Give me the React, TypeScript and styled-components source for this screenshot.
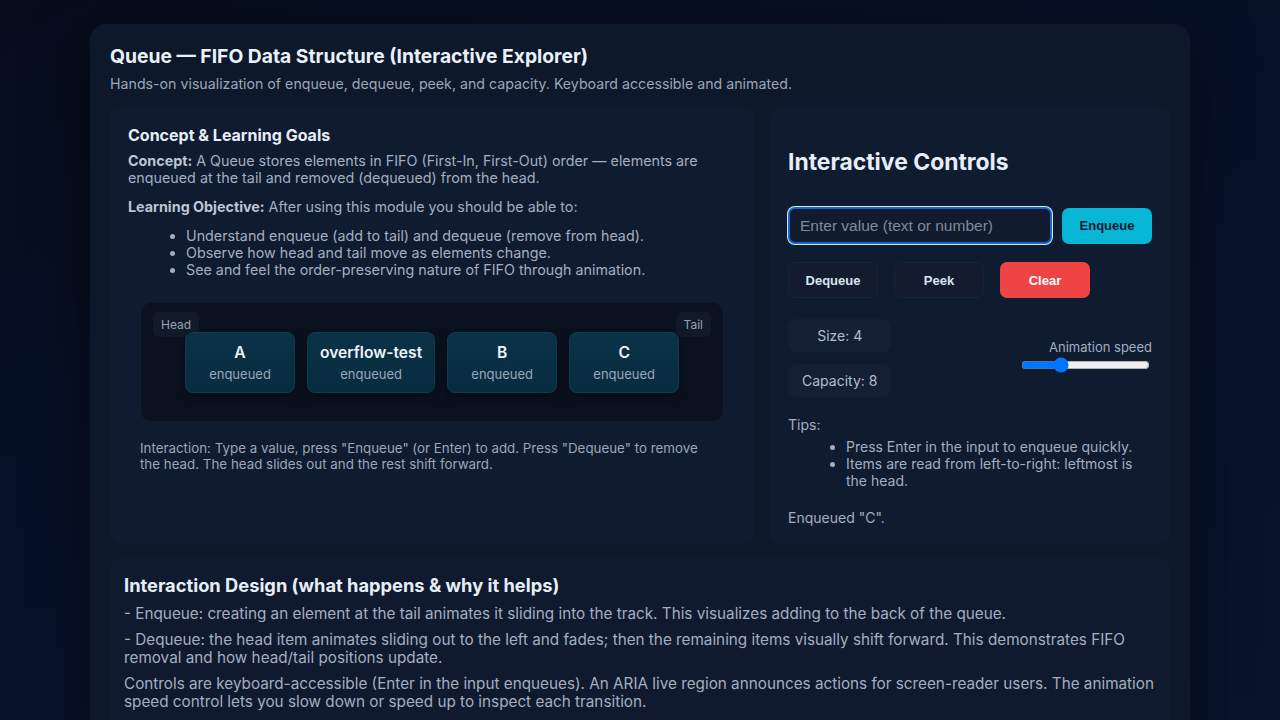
import React from "react";
import styled, { createGlobalStyle } from "styled-components";

const Global = createGlobalStyle`
  html, body { margin: 0; padding: 0; }
  body {
    background: linear-gradient(160deg, #050d1d 0%, #07122a 55%, #08152d 100%);
    min-height: 720px;
    font-family: Inter, "Noto Sans", sans-serif;
    color: #e6eef8;
  }
  * { box-sizing: border-box; }
`;

const Page = styled.div`
  padding: 24px 0 0;
`;

const Card = styled.main`
  width: 1100px;
  margin: 0 auto;
  background: #0d182b;
  border-radius: 16px;
  padding: 20px 20px 24px;
  box-shadow: 0 20px 60px rgba(0, 0, 0, 0.55);
`;

const Title = styled.h1`
  margin: 0;
  font-size: 19.3px;
  font-weight: 700;
  line-height: 24px;
  color: #eaf1fa;
`;

const Subtitle = styled.p`
  margin: 7px 0 16px;
  font-size: 14.2px;
  line-height: 17px;
  color: #9ba7b9;
`;

const Grid = styled.div`
  display: grid;
  grid-template-columns: minmax(0, 1fr) 400px;
  gap: 16px;
`;

const Panel = styled.section`
  background: #0f1b2f;
  border-radius: 10px;
  padding: 18px;
  min-width: 0;
`;

const PanelHeading = styled.h3`
  margin: 0 0 8px;
  font-size: 16px;
  line-height: 18px;
  font-weight: 700;
  color: #e6eef8;
`;

const Para = styled.p<{ $mt?: number }>`
  margin: ${(p) => p.$mt ?? 0}px 0 0;
  font-size: 14.3px;
  line-height: 17px;
  color: #a3afc0;
  b { color: #bcc6d4; font-weight: 700; margin-right: 4px; }
`;

const Bullets = styled.ul<{ $indent: number }>`
  margin: 12px 0 0;
  padding-left: ${(p) => p.$indent}px;
  font-size: 14.3px;
  line-height: 17px;
  color: #a3afc0;
`;

const TrackWrap = styled.div`
  padding: 25px 13px 0;
`;

const Track = styled.div`
  position: relative;
  background: #0a1220;
  border-radius: 10px;
  padding: 29px 44px 28px;
  display: flex;
  gap: 12px;
`;

const EndLabel = styled.span<{ $side: "left" | "right" }>`
  position: absolute;
  top: 9px;
  ${(p) => (p.$side === "left" ? "left: 12px;" : "right: 12px;")}
  font-size: 12px;
  line-height: 25px;
  height: 25px;
  padding: 0 8px;
  border-radius: 6px;
  background: #111a28;
  color: #97a3b5;
`;

const Item = styled.div`
  position: relative;
  flex-shrink: 0;
  min-width: 110px;
  height: 61px;
  padding: 0 12px;
  border-radius: 8px;
  background: linear-gradient(180deg, #0b3247 0%, #082c3f 100%);
  border: 1px solid #0f3c4d;
  box-shadow: 0 6px 14px rgba(0, 0, 0, 0.35);
  display: flex;
  flex-direction: column;
  align-items: center;
  justify-content: center;
  gap: 4px;
  white-space: nowrap;
`;

const ItemValue = styled.div`
  font-size: 15.6px;
  font-weight: 600;
  line-height: 19px;
  color: #eef5fb;
`;

const ItemState = styled.div`
  font-size: 13px;
  line-height: 16px;
  color: #97a9b8;
`;

const Note = styled.p`
  margin: 19px 30px 0 12px;
  font-size: 13.35px;
  line-height: 16px;
  color: #9ba7b9;
`;

const ControlsTitle = styled.h2`
  margin: 22px 0 0;
  font-size: 22.9px;
  line-height: 28px;
  font-weight: 700;
  color: #e6eef8;
`;

const InputRow = styled.div`
  display: flex;
  align-items: center;
  gap: 10px;
  margin-top: 31px;
`;

const TextInput = styled.input`
  flex: 1;
  height: 37px;
  border-radius: 7px;
  border: 2px solid #1665d6;
  box-shadow: 0 0 0 1px #dbe6f4;
  background: #111b2e;
  padding: 0 10px;
  font-family: "Liberation Sans", Arial, sans-serif;
  font-size: 15.5px;
  color: #e6eef8;
  outline: none;
  &::placeholder { color: #7f8b9d; }
`;

const Btn = styled.button<{ $variant: "primary" | "ghost" | "danger" }>`
  width: 90px;
  height: 36px;
  border-radius: 7px;
  font-family: "Liberation Sans", Arial, sans-serif;
  font-size: 13px;
  font-weight: 700;
  cursor: pointer;
  border: 1px solid
    ${(p) => (p.$variant === "ghost" ? "#182336" : "transparent")};
  background: ${(p) =>
    p.$variant === "primary" ? "#06b6d4" : p.$variant === "danger" ? "#ef4444" : "#121c2e"};
  color: ${(p) =>
    p.$variant === "primary" ? "#0a1a2a" : p.$variant === "danger" ? "#ffffff" : "#d9e4f1"};
`;

const ButtonRow = styled.div`
  display: flex;
  gap: 16px;
  margin-top: 18px;
`;

const StatsRow = styled.div`
  display: flex;
  justify-content: space-between;
  align-items: center;
  margin-top: 21px;
`;

const StatCol = styled.div`
  display: flex;
  flex-direction: column;
  gap: 12px;
`;

const Stat = styled.div`
  background: #132034;
  border-radius: 8px;
  padding: 8px 14px;
  font-size: 14px;
  line-height: 17px;
  text-align: center;
  color: #b2bdcc;
`;

const SpeedBox = styled.label`
  display: flex;
  flex-direction: column;
  align-items: flex-end;
  font-size: 13px;
  line-height: 16px;
  color: #a3afc0;
  margin-top: -2px;
`;

const Range = styled.input`
  margin: 2px;
  width: 129px;
`;

const Tips = styled.div`
  margin-top: 19px;
  font-size: 14px;
  line-height: 17px;
  color: #a3afc0;
`;

const TipList = styled.ul`
  margin: 5px 0 0;
  padding-left: 58px;
`;

const Status = styled.div`
  margin-top: 20px;
  font-size: 14px;
  line-height: 17px;
  color: #a3afc0;
`;

const Design = styled.section`
  margin-top: 14px;
  background: #0f1a2e;
  border-radius: 10px;
  padding: 16px 8px 14px 14px;
`;

const DesignHeading = styled.h3`
  margin: 0 0 9px;
  font-size: 18.3px;
  line-height: 22px;
  font-weight: 700;
  color: #e6eef8;
`;

const DesignPara = styled.p`
  margin: 0 0 8px;
  font-size: 15.28px;
  line-height: 18px;
  color: #a3afc0;
`;

const items = ["A", "overflow-test", "B", "C"];

export default function App() {
  return (
    <Page>
      <Global />
      <Card>
        <Title>Queue — FIFO Data Structure (Interactive Explorer)</Title>
        <Subtitle>
          Hands-on visualization of enqueue, dequeue, peek, and capacity. Keyboard accessible and animated.
        </Subtitle>
        <Grid>
          <Panel>
            <PanelHeading>Concept &amp; Learning Goals</PanelHeading>
            <Para>
              <b>Concept:</b>A Queue stores elements in FIFO (First-In, First-Out) order — elements are
              enqueued at the tail and removed (dequeued) from the head.
            </Para>
            <Para $mt={12}>
              <b>Learning Objective:</b>After using this module you should be able to:
            </Para>
            <Bullets $indent={58}>
              <li>Understand enqueue (add to tail) and dequeue (remove from head).</li>
              <li>Observe how head and tail move as elements change.</li>
              <li>See and feel the order-preserving nature of FIFO through animation.</li>
            </Bullets>
            <TrackWrap>
              <Track>
                <EndLabel $side="left">Head</EndLabel>
                <EndLabel $side="right">Tail</EndLabel>
                {items.map((v) => (
                  <Item key={v}>
                    <ItemValue>{v}</ItemValue>
                    <ItemState>enqueued</ItemState>
                  </Item>
                ))}
              </Track>
            </TrackWrap>
            <Note>
              Interaction: Type a value, press "Enqueue" (or Enter) to add. Press "Dequeue" to remove
              the head. The head slides out and the rest shift forward.
            </Note>
          </Panel>
          <Panel>
            <ControlsTitle>Interactive Controls</ControlsTitle>
            <InputRow>
              <TextInput placeholder="Enter value (text or number)" />
              <Btn $variant="primary">Enqueue</Btn>
            </InputRow>
            <ButtonRow>
              <Btn $variant="ghost">Dequeue</Btn>
              <Btn $variant="ghost">Peek</Btn>
              <Btn $variant="danger">Clear</Btn>
            </ButtonRow>
            <StatsRow>
              <StatCol>
                <Stat>Size: 4</Stat>
                <Stat>Capacity: 8</Stat>
              </StatCol>
              <SpeedBox>
                Animation speed
                <Range type="range" min={0} max={100} defaultValue={28} />
              </SpeedBox>
            </StatsRow>
            <Tips>
              Tips:
              <TipList>
                <li>Press Enter in the input to enqueue quickly.</li>
                <li>Items are read from left-to-right: leftmost is the head.</li>
              </TipList>
            </Tips>
            <Status>Enqueued "C".</Status>
          </Panel>
        </Grid>
        <Design>
          <DesignHeading>Interaction Design (what happens &amp; why it helps)</DesignHeading>
          <DesignPara>
            - Enqueue: creating an element at the tail animates it sliding into the track. This visualizes adding to the back of the queue.
          </DesignPara>
          <DesignPara>
            - Dequeue: the head item animates sliding out to the left and fades; then the remaining items visually shift forward. This demonstrates FIFO removal and how head/tail positions update.
          </DesignPara>
          <DesignPara>
            Controls are keyboard-accessible (Enter in the input enqueues). An ARIA live region announces actions for screen-reader users. The animation speed control lets you slow down or speed up to inspect each transition.
          </DesignPara>
        </Design>
      </Card>
    </Page>
  );
}
